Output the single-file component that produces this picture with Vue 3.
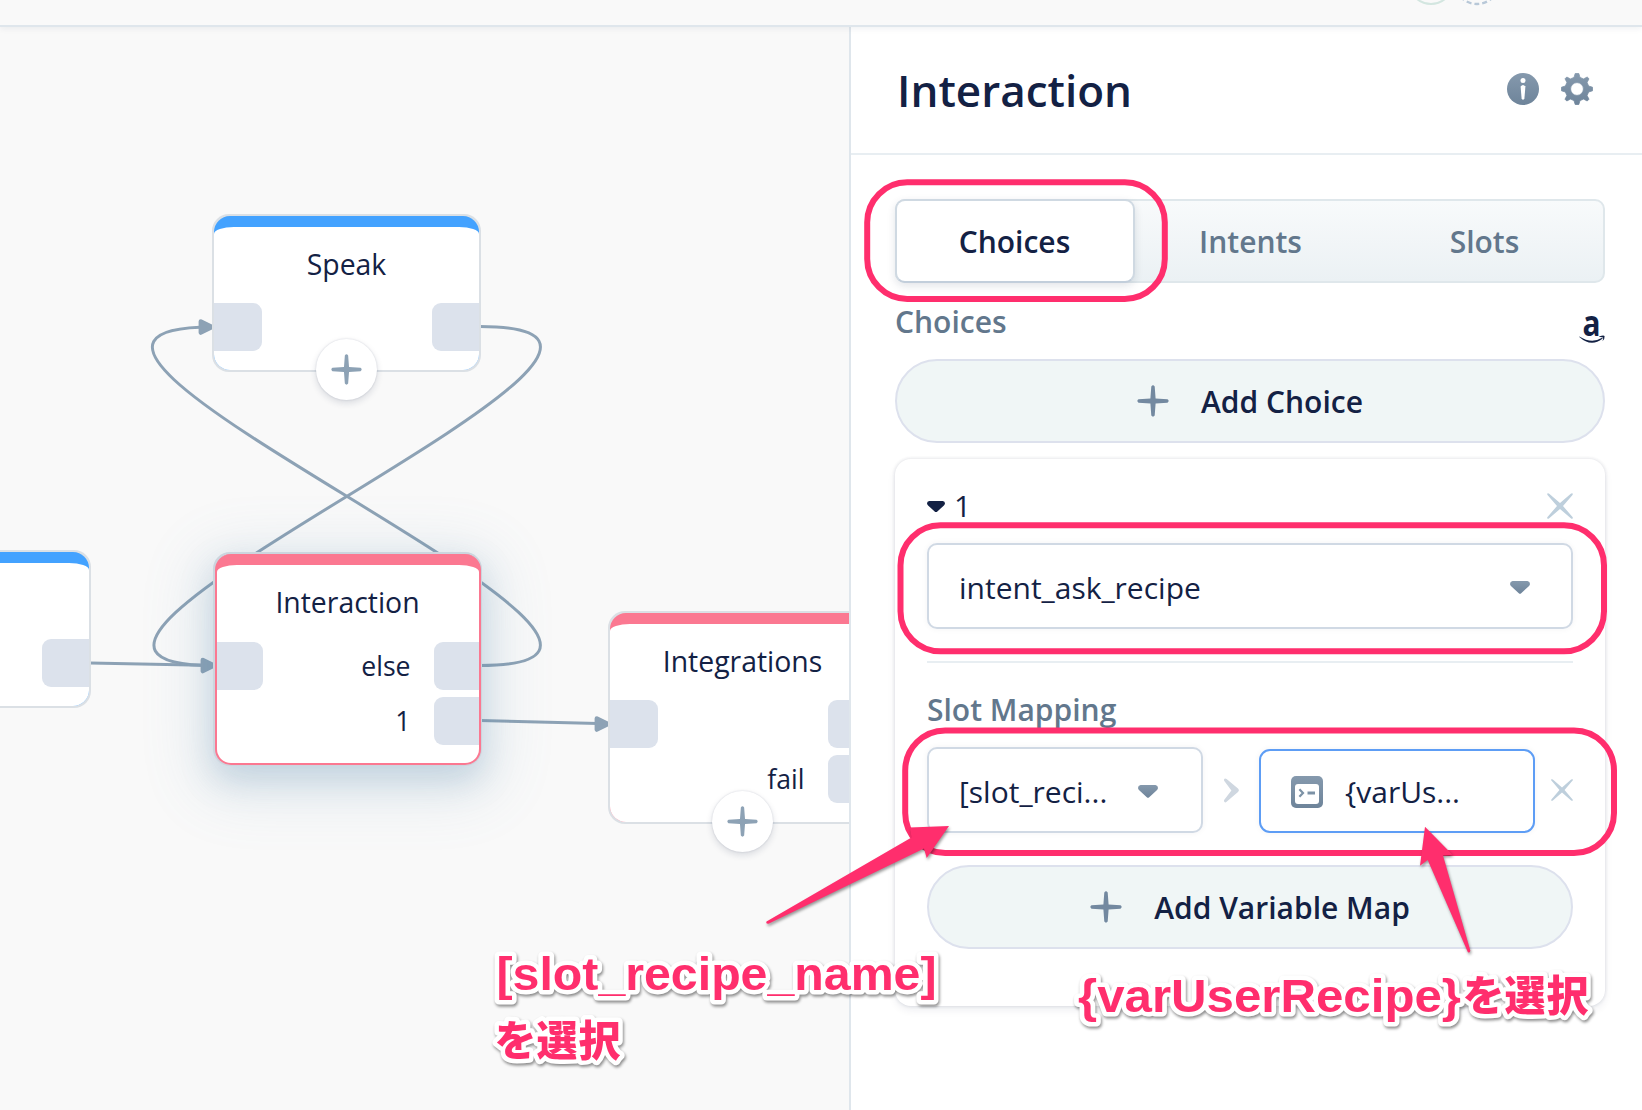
<script setup>
const nodes = [
  { id: 'start', title: '', color: '#43a2ff', x: -178, y: 550, h: 158, out: [{ label: '' }], add: false },
  { id: 'speak', title: 'Speak', color: '#43a2ff', x: 212, y: 214, h: 158, in: true, out: [{ label: '' }], add: true },
  { id: 'interaction', title: 'Interaction', color: '#fb7891', x: 213, y: 552, h: 214, in: true, active: true, out: [{ label: 'else' }, { label: '1' }], add: false },
  { id: 'integrations', title: 'Integrations', color: '#fb7891', x: 608, y: 611, h: 213, in: true, out: [{ label: '' }, { label: 'fail' }], add: true },
]
const links = [
  'M480 326.5 C766 326.5 -71 665.5 214 665.5',
  'M480 665.5 C766 665.5 -72 327 212 327',
  'M90 663 L204 665.3',
  'M480 720.5 L598 723.6',
]
const heads = [[214, 327], [216, 665.5], [610, 724]]
const tabs = ['Choices', 'Intents', 'Slots']
const plus = 'M14.3 1.5 Q16 -0.8 17.7 1.5 L18.6 13.4 L30.5 14.3 Q32.8 16 30.5 17.7 L18.6 18.6 L17.7 30.5 Q16 32.8 14.3 30.5 L13.4 18.6 L1.5 17.7 Q-0.8 16 1.5 14.3 L13.4 13.4 Z'
const cross = 'M0.4 0.4 Q1.2 -0.2 2.2 0.7 L13 10 L23.8 0.7 Q24.8 -0.2 25.6 0.4 Q26.2 1.2 25.3 2.2 L16 13 L25.3 23.8 Q26.2 24.8 25.6 25.6 Q24.8 26.2 23.8 25.3 L13 16 L2.2 25.3 Q1.2 26.2 0.4 25.6 Q-0.2 24.8 0.7 23.8 L10 13 L0.7 2.2 Q-0.2 1.2 0.4 0.4 Z'
const caret = 'M2.5 0 H17.5 Q20 0.3 20 3 Q19.8 4.3 18.8 5.2 L11.2 12.2 Q10 13.4 8.8 12.2 L1.2 5.2 Q0.2 4.3 0 3 Q0 0.3 2.5 0 Z'
</script>

<template>
  <div class="screen">
    <svg width="0" height="0" class="defs">
      <defs>
        <linearGradient id="slate" x1="0" y1="0" x2="0" y2="1">
          <stop offset="0" stop-color="#8599ad" />
          <stop offset="1" stop-color="#6e849a" />
        </linearGradient>
      </defs>
    </svg>

    <header class="topbar">
      <svg width="90" height="6" viewBox="0 0 90 6">
        <circle cx="21" cy="-18" r="22" fill="none" stroke="#d3e6e0" stroke-width="2" />
        <circle cx="67" cy="-18" r="22" fill="none" stroke="#b8c8d8" stroke-width="2.4" stroke-dasharray="5 3" />
      </svg>
    </header>

    <div class="body">
      <main class="canvas">
        <svg class="links" width="849" height="1110" viewBox="0 0 849 1110">
          <path v-for="d in links" :key="d" :d="d" fill="none" stroke="#8da2b5" stroke-width="3" />
          <path
            v-for="[x, y] in heads"
            :key="x"
            :transform="`translate(${x} ${y})`"
            d="M-13.2 -5.6 L-2 0 L-13.2 5.6 Z"
            fill="#8da2b5"
            stroke="#8da2b5"
            stroke-width="4.4"
            stroke-linejoin="round"
          />
        </svg>
        <section
          v-for="n in nodes"
          :key="n.id"
          class="node"
          :class="{ active: n.active }"
          :style="{ left: n.x + 'px', top: n.y + 'px', height: n.h + 'px', '--tone': n.color }"
        >
          <div class="cap"><div class="face"></div></div>
          <h3>{{ n.title }}</h3>
          <div class="ports">
            <i v-if="n.in" class="port in"></i>
            <div class="outs">
              <div v-for="(o, i) in n.out" :key="i" class="out">
                <span>{{ o.label }}</span><i class="port"></i>
              </div>
            </div>
          </div>
          <button v-if="n.add" class="add">
            <svg width="31" height="31" viewBox="0 0 32 32"><path :d="plus" fill="#8da2b5" /></svg>
          </button>
        </section>
      </main>

      <aside class="panel">
        <div class="head">
          <h1>Interaction</h1>
          <div class="tools">
            <svg width="32" height="32" viewBox="0 0 32 32">
              <circle cx="16" cy="16" r="16" fill="url(#slate)" />
              <circle cx="16" cy="7.4" r="2.5" fill="#fff" />
              <path d="M13.6 13.5 Q16 10.5 18.4 13.5 L17.4 25.5 Q16 28 14.6 25.5 Z" fill="#fff" />
            </svg>
            <svg width="32" height="32" viewBox="0 0 32 32">
              <path
                fill="url(#slate)"
                fill-rule="evenodd"
                stroke="url(#slate)"
                stroke-width="0.8"
                stroke-linejoin="round"
                d="M14.2 0.5 H17.8 L19 4.4 L22.6 5.9 L26.2 4 L28 5.8 L26.1 9.4 L27.6 13 L31.5 14.2 V17.8 L27.6 19 L26.1 22.6 L28 26.2 L26.2 28 L22.6 26.1 L19 27.6 L17.8 31.5 H14.2 L13 27.6 L9.4 26.1 L5.8 28 L4 26.2 L5.9 22.6 L4.4 19 L0.5 17.8 V14.2 L4.4 13 L5.9 9.4 L4 5.8 L5.8 4 L9.4 5.9 L13 4.4 Z M16 9.6 A6.4 6.4 0 1 0 16 22.4 A6.4 6.4 0 1 0 16 9.6 Z"
              />
            </svg>
          </div>
        </div>

        <div class="content">
          <nav class="tabs">
            <button v-for="(t, i) in tabs" :key="t" :class="{ on: i === 0 }">{{ t }}</button>
          </nav>

          <div class="label-row">
            <h2>Choices</h2>
            <svg class="amazon" width="26" height="29" viewBox="0 0 26 29" fill="#132144">
              <text x="3.6" y="20.6" font-size="35" font-weight="700" textLength="18" lengthAdjust="spacingAndGlyphs">a</text>
              <path d="M0.4 21.4 Q12.5 29.2 23.2 22.8 Q24 23 23.4 23.8 Q12 32.5 0.3 22 Z" />
              <path d="M20.2 21.5 Q24.5 20 25.6 21 Q26 23.6 23.4 26.2 Q24.6 23.4 24 22.4 Q22.8 21.7 20.2 22 Z" />
            </svg>
          </div>

          <button class="pill">
            <svg width="32" height="32" viewBox="0 0 32 32"><path :d="plus" fill="#7389a0" /></svg>
            Add Choice
          </button>

          <section class="card">
            <div class="card-head">
              <svg width="18" height="11" viewBox="0 0 20 12.6" preserveAspectRatio="none"><path :d="caret" fill="#132144" /></svg>
              <span>1</span>
              <svg class="close" width="26" height="26" viewBox="0 0 26 26"><path :d="cross" fill="#becfdc" /></svg>
            </div>
            <div class="select wide">
              <span>intent_ask_recipe</span>
              <svg width="20" height="13" viewBox="0 0 20 13"><path :d="caret" fill="url(#slate)" /></svg>
            </div>
            <hr />
            <h2 class="slot">Slot Mapping</h2>
            <div class="mapping">
              <div class="select small">
                <span>[slot_reci...</span>
                <svg width="20" height="13" viewBox="0 0 20 13"><path :d="caret" fill="url(#slate)" /></svg>
              </div>
              <svg class="chev" width="15" height="25" viewBox="0 0 15 25">
                <path d="M0 1.5 Q0.8 -0.4 2.6 1 L14 10.5 Q15.8 12.3 14 14 L2.6 23.8 Q0.8 25.2 0 23.3 Q-0.2 22.4 0.5 21.6 L7.4 12.4 L0.5 3.2 Q-0.2 2.4 0 1.5 Z" fill="#cfd7e0" />
              </svg>
              <div class="variable">
                <svg width="32" height="32" viewBox="0 0 32 32">
                  <rect width="32" height="32" rx="5" fill="url(#slate)" />
                  <rect x="4" y="8" width="24" height="20" rx="3" fill="#fff" />
                  <path d="M8.4 13.2 L12 17 L8.4 20.8" fill="none" stroke="#7c92a6" stroke-width="2.2" />
                  <path d="M16.5 17 H24" stroke="#7c92a6" stroke-width="3" />
                </svg>
                <span>{varUs...</span>
              </div>
              <svg class="remove" width="22" height="22" viewBox="0 0 26 26"><path :d="cross" fill="#becfdc" /></svg>
            </div>
            <button class="pill">
              <svg width="32" height="32" viewBox="0 0 32 32"><path :d="plus" fill="#7389a0" /></svg>
              Add Variable Map
            </button>
          </section>
        </div>
      </aside>
    </div>

    <svg class="notes" width="1642" height="1110" viewBox="0 0 1642 1110">
      <g fill="none" stroke="#ff2e6d" stroke-width="6">
        <rect x="867.2" y="182.3" width="297.6" height="116.6" rx="40" />
        <rect x="900.5" y="525.3" width="703.5" height="126" rx="40" />
        <rect x="905.2" y="730.5" width="708.8" height="122.5" rx="40" />
      </g>
      <g class="arrow" fill="#ff2e6d">
        <path d="M766.5 921.5 L911.5 837.5 L910 827.5 L949 826 L926.7 858 L924 848.5 L768.5 923.8 Q765.5 924 766.5 921.5 Z" />
        <path d="M1425 826.7 L1452.5 854.8 L1443 855.5 L1470.3 950.5 Q1470 953.5 1467.8 952 L1427.7 860 L1420 865.7 Z" />
      </g>
      <g class="callout" font-size="47" font-weight="700">
        <text x="496.5" y="989.8" textLength="440" lengthAdjust="spacingAndGlyphs">[slot_recipe_name]</text>
        <text x="494.5" y="1055.5" class="jp" textLength="126">を選択</text>
        <text x="1078" y="1011.8" textLength="383" lengthAdjust="spacingAndGlyphs">{varUserRecipe}</text>
        <text x="1462.5" y="1010.8" class="jp" textLength="126">を選択</text>
      </g>
    </svg>
  </div>
</template>

<style>
body { margin: 0; overflow: hidden; }
</style>

<style scoped>
* { box-sizing: border-box; }
.screen {
  position: relative;
  width: 1642px;
  height: 1110px;
  overflow: hidden;
  display: flex;
  flex-direction: column;
  background: #f9f9f9;
  color: #132144;
  font-family: "Open Sans", "Noto Sans CJK JP", sans-serif;
}
.defs { position: absolute; }
.topbar {
  position: relative;
  z-index: 3;
  flex: none;
  display: flex;
  justify-content: flex-end;
  align-items: flex-start;
  height: 27px;
  padding-right: 142px;
  background: #f9f9f9;
  border-bottom: 2px solid #dfe6ec;
  box-shadow: 0 2px 6px rgba(19, 33, 68, 0.06);
}
.body { flex: 1; display: flex; min-height: 0; }
.canvas { width: 849px; overflow: hidden; }
/* canvas items are placed in screen coordinates */
.links { position: absolute; left: 0; top: 0; }
.node {
  position: absolute;
  width: 269px;
  padding: 2px;
  border-radius: 17px;
  background: #dbe0e5;
  display: flex;
  flex-direction: column;
}
.cap {
  position: absolute;
  inset: 2px;
  border-radius: 16px;
  background: var(--tone);
  overflow: hidden;
}
.face {
  height: 100%;
  margin-top: 11px;
  background: #fff;
  border-radius: 20px 20px 0 0 / 7px 7px 0 0;
}
.node.active {
  background: #ccd5de;
  box-shadow: 0 14px 60px 16px rgba(90, 140, 175, 0.14), 0 14px 32px rgba(90, 140, 175, 0.25);
}
.active .cap { border: 2px solid var(--tone); border-top: 0; right: 1px; bottom: 1px; }
.node h3 {
  position: relative;
  margin: 28.5px 0 0;
  height: 38px;
  text-align: center;
  font-size: 28.4px;
  line-height: 38px;
  font-weight: 400;
}
.ports { position: relative; display: flex; justify-content: space-between; margin-top: 20.5px; }
.active .ports { margin: 21px 1px 0 2px; }
.port { display: block; width: 47.5px; height: 48px; background: #dce2ec; border-radius: 9px 0 0 9px; }
.port.in { border-radius: 0 9px 9px 0; }
.active .port { width: 45.5px; }
.outs { display: flex; flex-direction: column; gap: 7px; margin-left: auto; }
.out { display: flex; align-items: center; justify-content: flex-end; gap: 23px; font-size: 26.6px; line-height: 48px; }
.add {
  position: absolute;
  left: 104px;
  bottom: -28px;
  width: 61px;
  height: 61px;
  padding: 0;
  border: 0;
  border-radius: 50%;
  background: #fff;
  display: flex;
  align-items: center;
  justify-content: center;
  box-shadow: 0 0 2px rgba(19, 33, 68, 0.16), 0 3px 7px rgba(19, 33, 68, 0.14);
}
.panel {
  position: relative;
  z-index: 2;
  flex: 1;
  background: #fff;
  border-left: 2px solid #dfe6ec;
}
.head {
  height: 128px;
  padding: 0 49px 0 46px;
  border-bottom: 2px solid #e8eef2;
  display: flex;
  align-items: center;
  justify-content: space-between;
}
h1 { margin: 0; font-size: 44px; line-height: 60px; font-weight: 600; }
.tools { display: flex; gap: 22px; margin-bottom: 2px; }
.tools svg { display: block; }
.content { padding: 44px 37px 0 44px; }
button { font-family: inherit; color: inherit; }
.tabs {
  display: flex;
  height: 84px;
  border: 2px solid #dfe7eb;
  border-radius: 10px;
  background: linear-gradient(#f8fafb, #ebf1f4);
}
.tabs button {
  flex: 1;
  border: 0;
  padding: 1px 3px 0 0;
  background: none;
  font-size: 30px;
  font-weight: 600;
  color: #62778c;
}
.tabs .on {
  flex: none;
  width: 240px;
  margin: -2px 0 -2px -2px;
  padding: 1px 1px 0 0;
  border: 2px solid #cfd9e2;
  border-bottom-color: #c2cedb;
  border-radius: 10px;
  background: #fff;
  color: #132144;
  box-shadow: 0 3px 8px rgba(19, 33, 68, 0.12);
}
.label-row { display: flex; justify-content: space-between; height: 76px; }
h2 { margin: 18px 0 0; font-size: 30px; line-height: 41px; font-weight: 600; color: #62778c; }
.amazon { margin-top: 32px; overflow: visible; }
.pill {
  width: 100%;
  height: 84px;
  padding: 0;
  border: 2px solid #dde1ed;
  border-radius: 42px;
  background: #f0f6f6;
  display: flex;
  align-items: center;
  justify-content: center;
  gap: 32px;
  font-size: 30px;
  font-weight: 600;
}
.card {
  margin-top: 16px;
  height: 547px;
  padding: 27px 32px 0;
  border-radius: 16px;
  box-shadow: 0 0 3px 1px rgba(19, 33, 68, 0.09), 0 4px 8px rgba(19, 33, 68, 0.07);
}
.card-head { display: flex; align-items: center; height: 40px; font-size: 30px; line-height: 40px; }
.card-head span { margin-left: 9px; }
.close { margin-left: auto; }
.select, .variable {
  display: flex;
  align-items: center;
  border: 2px solid #d0d9e4;
  border-radius: 10px;
  background: #fff;
  font-size: 30px;
  box-shadow: 0 0 6px rgba(19, 33, 68, 0.05);
}
.select { justify-content: space-between; height: 86px; }
.wide { margin-top: 17px; padding: 2px 41px 0 30px; }
.small { width: 276px; padding: 2px 43px 0 30px; }
hr { margin: 32px 0 0; border: 0; height: 2px; background: #e8eef2; }
.slot { margin-top: 26px; }
.mapping { display: flex; align-items: flex-end; margin-top: 17px; }
.chev { margin: 0 20px 30px 21px; }
.variable { width: 276px; height: 84px; padding: 1px 30px 0; border-color: #5d9df5; border-radius: 11px; }
.variable svg { margin-top: 1px; }
.variable span { margin-left: 22px; }
.remove { margin: 0 0 32px 16px; }
.card .pill { margin-top: 32px; }
.notes { position: absolute; left: 0; top: 0; z-index: 5; pointer-events: none; }
.arrow { filter: drop-shadow(1px 2px 1.5px rgba(0, 0, 0, 0.4)); }
.callout {
  fill: #ff2e6d;
  stroke: #fff;
  stroke-width: 9px;
  stroke-linejoin: round;
  paint-order: stroke;
  font-family: "Liberation Sans", "Noto Sans CJK JP", sans-serif;
  filter: drop-shadow(1px 2.5px 1.5px rgba(0, 0, 0, 0.45));
}
.jp { font-size: 42px; font-weight: 900; font-family: "Noto Sans CJK JP", sans-serif; }
</style>
